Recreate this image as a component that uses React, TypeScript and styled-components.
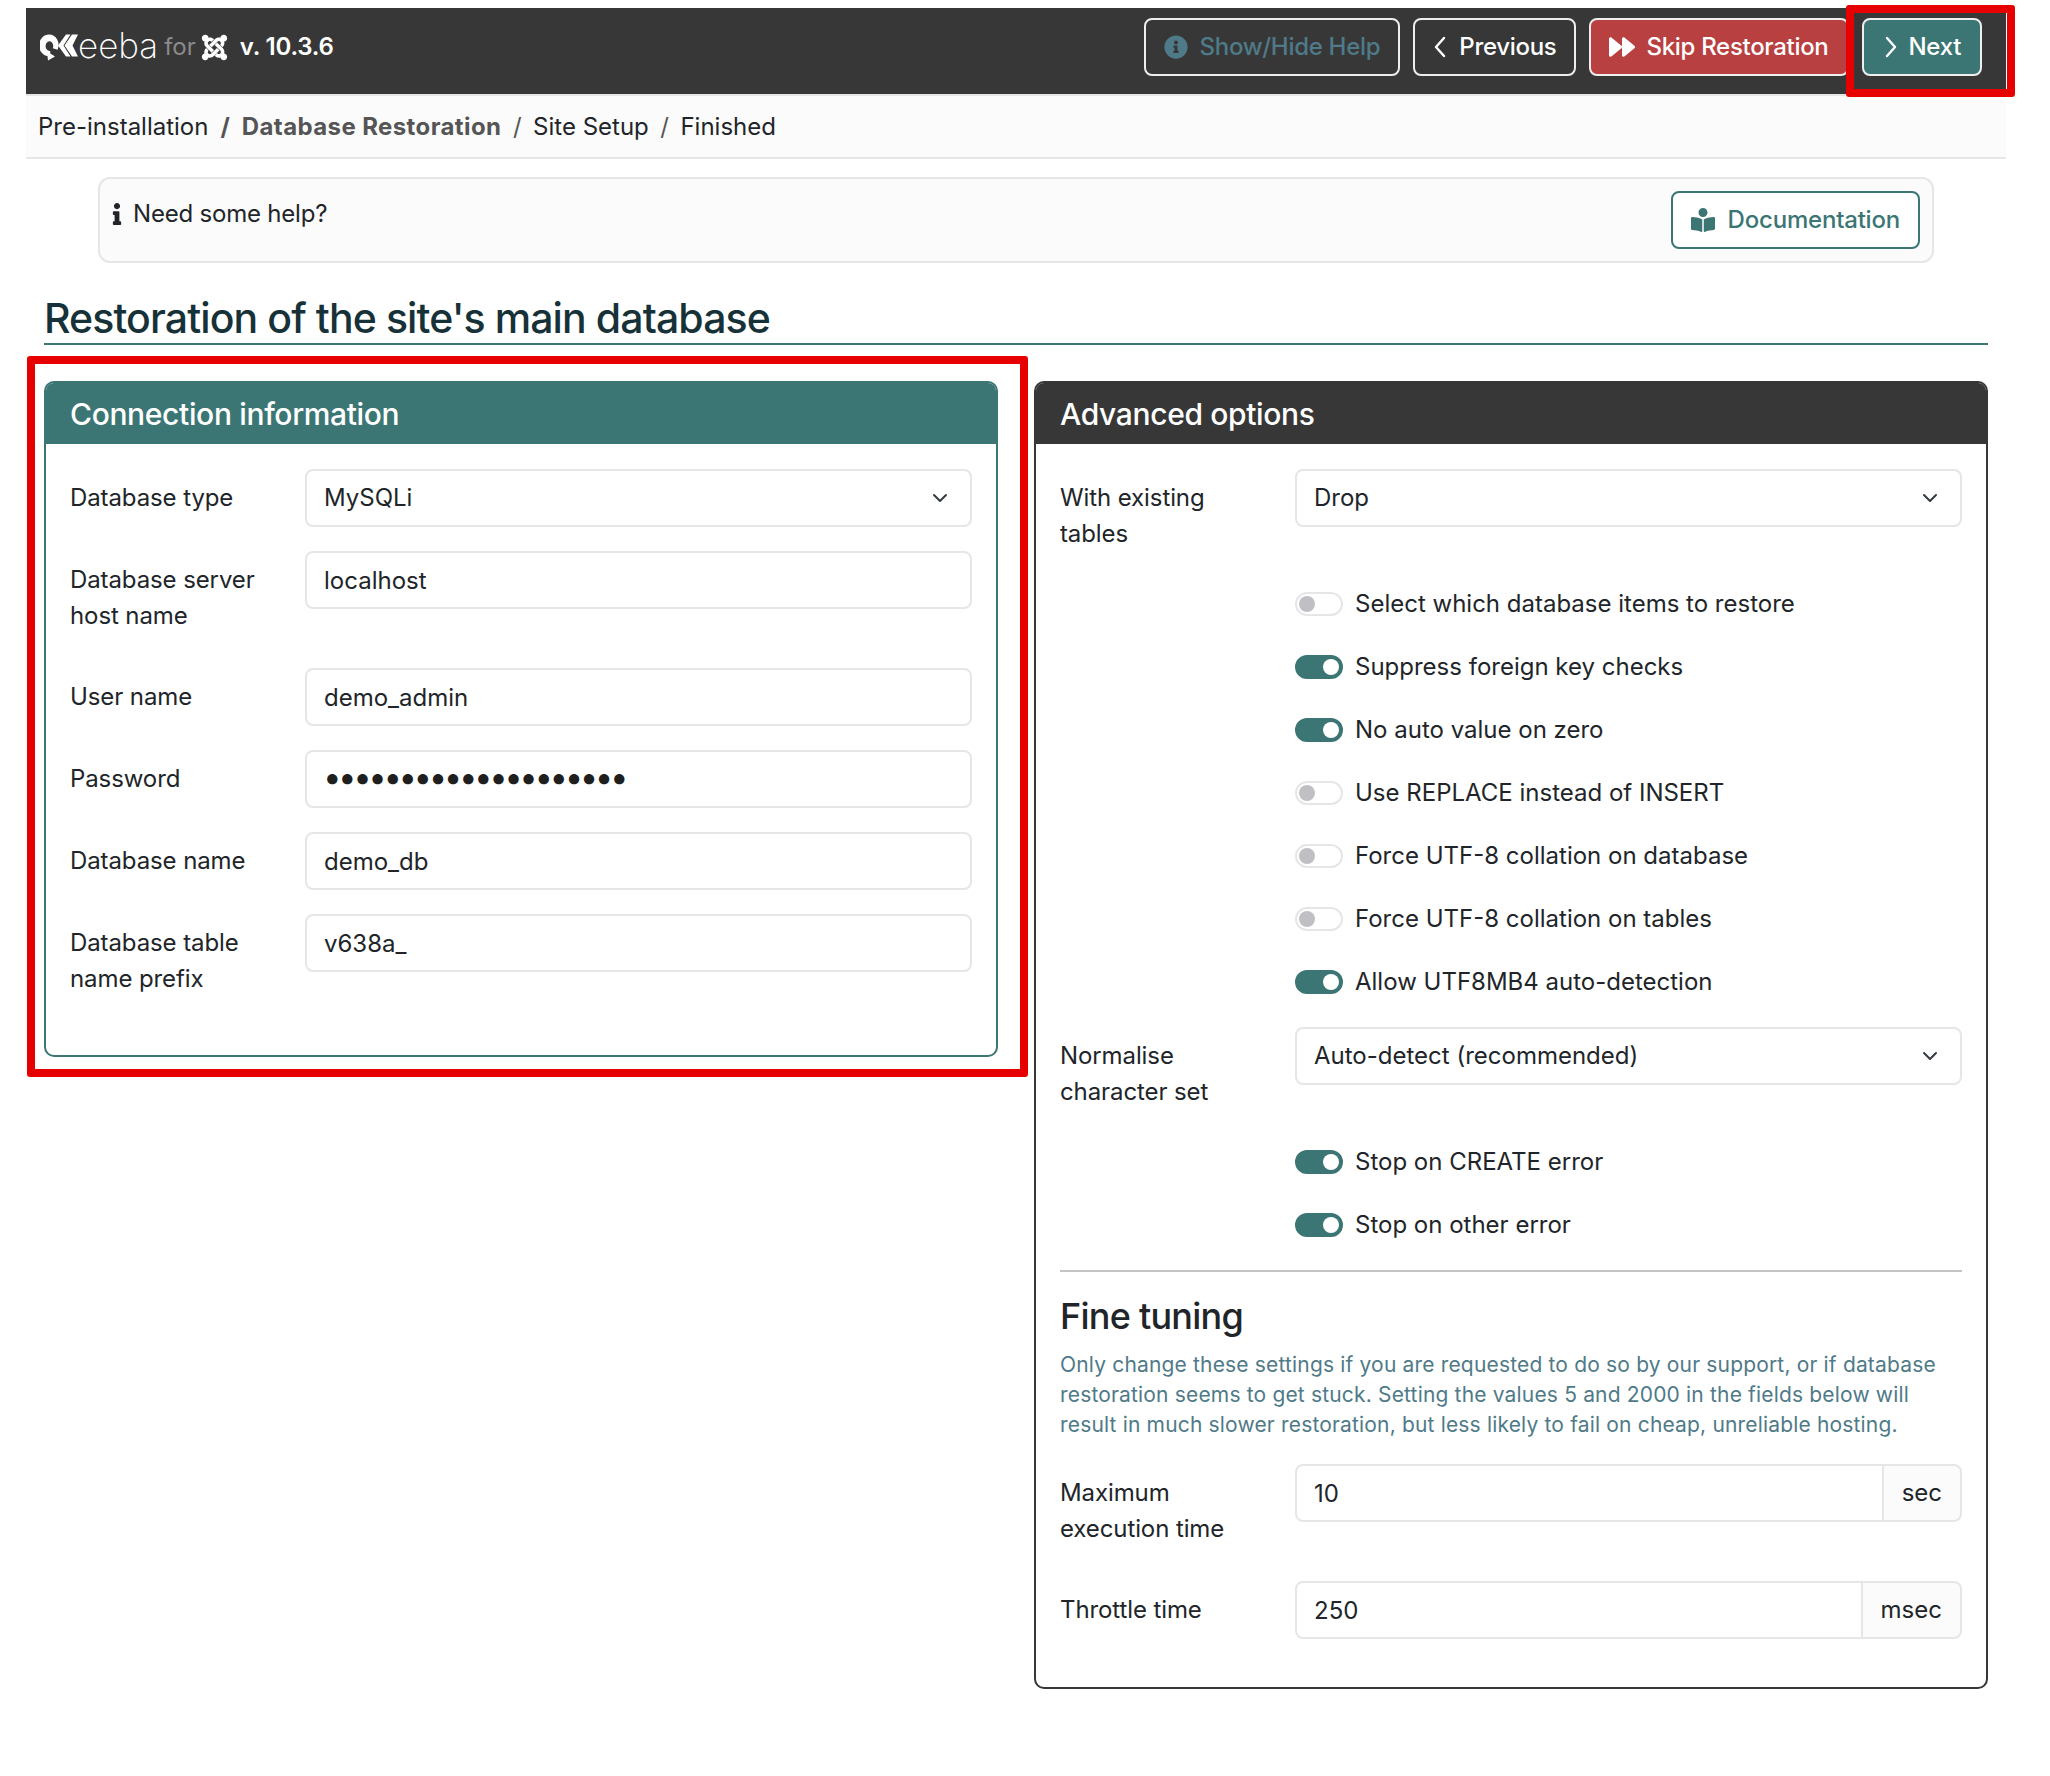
import React from "react";
import styled, { createGlobalStyle } from "styled-components";
import { FaBookReader, FaForward, FaInfo, FaInfoCircle, FaJoomla } from "react-icons/fa";

const TEAL = "#3b7675";
const DARK = "#373737";
const MUTED = "#4f7a88";
const LINE = "#e6e6e6";

const GlobalStyle = createGlobalStyle`
  html, body {
    margin: 0;
    background: #fff;
  }
  body {
    font-family: Inter, "Liberation Sans", sans-serif;
    font-size: 24px;
    line-height: 36px;
    color: #212529;
  }
  * {
    box-sizing: border-box;
  }
`;

const Page = styled.div`
  position: relative;
  width: 2050px;
  height: 1776px;
  padding: 8px 44px 0 26px;
  overflow: hidden;
`;

const Toolbar = styled.header`
  display: flex;
  justify-content: space-between;
  align-items: center;
  height: 88px;
  padding: 10px 24px 18px 14px;
  background: ${DARK};
  border-bottom: 2px solid ${LINE};
`;

const Brand = styled.div`
  display: flex;
  align-items: center;
  color: #fff;
`;

const LogoWord = styled.span`
  font-weight: 200;
  font-size: 35px;
  line-height: 50px;
  margin: -4px 0 0 0;
`;

const LogoFor = styled.span`
  color: #8a8a8a;
  margin-left: 6px;
`;

const JoomlaMark = styled(FaJoomla)`
  width: 29px;
  height: 29px;
  margin-left: 4px;
`;

const Version = styled.span`
  margin-left: 11px;
  font-weight: 600;
  letter-spacing: -0.2px;
`;

const Actions = styled.div`
  display: flex;
  gap: 13px;
`;

const ToolButton = styled.button<{ $bg?: string; $fg?: string }>`
  display: flex;
  align-items: center;
  gap: 12px;
  height: 58px;
  padding: 0 18px;
  font: 500 24px/36px Inter, sans-serif;
  letter-spacing: -0.3px;
  color: ${({ $fg }) => $fg || "#fff"};
  background: ${({ $bg }) => $bg || "transparent"};
  border: 2px solid #eee;
  border-radius: 8px;
`;

const SkipButton = styled(ToolButton)`
  gap: 11px;
`;

const NextButton = styled(ToolButton)`
  gap: 11px;
  padding: 0 19px 0 20px;
`;

const Breadcrumb = styled.nav`
  display: flex;
  align-items: center;
  height: 63px;
  padding: 0 12px;
  background: #fbfbfb;
  border-bottom: 2px solid ${LINE};
`;

const Step = styled.span<{ $active?: boolean }>`
  font-weight: ${({ $active }) => ($active ? 700 : 400)};
  letter-spacing: ${({ $active }) => ($active ? "0.4px" : "0")};
  color: ${({ $active }) => ($active ? "#555" : "#212529")};
`;

const Slash = styled.span<{ $bold?: boolean }>`
  margin: 0 ${({ $bold }) => ($bold ? "12px" : "11.5px")};
  font-weight: ${({ $bold }) => ($bold ? 700 : 400)};
  color: #555;
`;

const Well = styled.div`
  display: flex;
  justify-content: space-between;
  margin: 18px 72px 0;
  height: 86px;
  padding: 12px;
  background: #fbfbfb;
  border: 2px solid ${LINE};
  border-radius: 12px;
`;

const HelpText = styled.div`
  display: flex;
  align-items: center;
  gap: 11px;
  height: 36px;
  margin-top: 5px;
  letter-spacing: -0.2px;
`;

const HelpIcon = styled(FaInfo)`
  width: 10px;
  height: 22px;
`;

const DocButton = styled.button`
  display: flex;
  align-items: center;
  gap: 13px;
  height: 58px;
  padding: 0 18px;
  font: 500 24px/36px Inter, sans-serif;
  letter-spacing: -0.2px;
  color: ${TEAL};
  background: #fff;
  border: 2px solid ${TEAL};
  border-radius: 8px;
`;

const Main = styled.main`
  padding: 0 18px;
`;

const Title = styled.h1`
  margin: 30px 0 36px;
  font-size: 41px;
  line-height: 50px;
  font-weight: 540;
  letter-spacing: -0.9px;
  color: #163238;
  border-bottom: 2px solid ${TEAL};
`;

const Columns = styled.div`
  display: grid;
  grid-template-columns: 954px 954px;
  gap: 36px;
  align-items: start;
`;

const Panel = styled.section<{ $color: string }>`
  border: 2px solid ${({ $color }) => $color};
  border-radius: 10px;
  overflow: hidden;
`;

const PanelHeader = styled.h2<{ $color: string }>`
  margin: -2px -2px 0;
  height: 63px;
  padding: 0 26px;
  font-size: 30px;
  line-height: 66px;
  font-weight: 500;
  letter-spacing: -0.35px;
  color: #fff;
  background: ${({ $color }) => $color};
`;

const PanelBody = styled.div`
  padding: 25px 24px 24px;
`;

const Row = styled.div`
  display: grid;
  grid-template-columns: 235px 1fr;
  margin-bottom: 24px;
`;

const Label = styled.label`
  padding: 10.5px 20px 10.5px 0;
  letter-spacing: -0.1px;
`;

const Input = styled.input`
  display: block;
  width: 100%;
  height: 58px;
  padding: 0 17px;
  font: 400 24px/36px Inter, sans-serif;
  color: #212529;
  background: #fff;
  border: 2px solid ${LINE};
  border-radius: 8px;
  outline: none;
`;

const PasswordInput = styled(Input)`
  padding: 0 18px 5px 16px;
  font-size: 33px;
  letter-spacing: -3.46px;
  color: #1f1f1f;
`;

const SelectWrap = styled.div`
  position: relative;
`;

const SelectBox = styled.select`
  display: block;
  width: 100%;
  height: 58px;
  padding: 0 17px;
  font: 400 24px/36px Inter, sans-serif;
  color: #212529;
  background: #fff;
  border: 2px solid ${LINE};
  border-radius: 8px;
  appearance: none;
  outline: none;
`;

const Caret = styled.svg`
  position: absolute;
  top: 21px;
  right: 24px;
  width: 16px;
  height: 16px;
  pointer-events: none;
`;

const SwitchRow = styled.div`
  display: flex;
  align-items: center;
  gap: 12px;
  height: 36px;
  margin: 0 0 27px 235px;
`;

const SwitchTrack = styled.span<{ $on?: boolean }>`
  position: relative;
  display: block;
  width: 48px;
  height: 24px;
  border-radius: 12px;
  background: ${({ $on }) => ($on ? TEAL : "#fff")};
  border: 2px solid ${({ $on }) => ($on ? TEAL : LINE)};

  &::after {
    content: "";
    position: absolute;
    top: 2px;
    left: ${({ $on }) => ($on ? "26px" : "2px")};
    width: 16px;
    height: 16px;
    border-radius: 50%;
    background: ${({ $on }) => ($on ? "#fff" : "#c0bfc3")};
  }
`;

const Divider = styled.hr`
  margin: 2px 0 0;
  border: 0;
  border-top: 2px solid #c4c4c4;
`;

const SubTitle = styled.h3`
  margin: 22px 0 12px;
  font-size: 36px;
  line-height: 44px;
  font-weight: 500;
  letter-spacing: -0.75px;
`;

const Note = styled.p`
  margin: 0 0 24px;
  font-size: 21px;
  line-height: 30px;
  letter-spacing: 0.17px;
  color: ${MUTED};
`;

const InputGroup = styled.div`
  display: flex;

  ${Input} {
    flex: 1;
    min-width: 0;
    border-radius: 8px 0 0 8px;
  }
`;

const Addon = styled.span`
  display: flex;
  align-items: center;
  height: 58px;
  padding: 0 18px;
  margin-left: -2px;
  background: #fbfbfb;
  border: 2px solid ${LINE};
  border-radius: 0 8px 8px 0;
`;

// red marks the author put on top of the screenshot
const MarkNext = styled.div`
  position: absolute;
  left: 1846px;
  top: 5px;
  width: 169px;
  height: 92px;
  border: 8px solid #e60000;
  border-radius: 3px;
`;

const MarkConnection = styled.div`
  position: absolute;
  left: 27px;
  top: 356px;
  width: 1001px;
  height: 721px;
  border: 8px solid #e60000;
  border-radius: 3px;
`;

const Chevron = ({ d }: { d: string }) => (
  <svg width="14" height="24" viewBox="0 0 14 24" fill="none" stroke="currentColor" strokeWidth="2.4" strokeLinecap="round" strokeLinejoin="round">
    <path d={d} />
  </svg>
);

const AkeebaMark = () => (
  <svg width="38" height="27" viewBox="0 0 38 27" fill="#fff">
    <path d="M9 0.5a9.5 10.5 0 0 1 8.6 15.2l-4.8-1.4a3.8 4.8 0 1 0-3.6 2.6l1 0v5.2l-1.2 0.2A9.5 10.5 0 0 1 9 0.5z" />
    <path d="M7 17.5l8 5-7 4z" />
    <path d="M18 11.5L26 0.5h4.5L23.5 11.5l7 11H26z" />
    <path d="M24.5 11.5L32 0.5H38L32.5 11.5 38 22.5h-6z" />
  </svg>
);

const SelectField = ({ value }: { value: string }) => (
  <SelectWrap>
    <SelectBox defaultValue={value}>
      <option>{value}</option>
    </SelectBox>
    <Caret viewBox="0 0 16 16" fill="none" stroke="#343a40" strokeWidth="2" strokeLinecap="round" strokeLinejoin="round">
      <path d="M2 5l6 6 6-6" />
    </Caret>
  </SelectWrap>
);

const Toggle = ({ on, children }: { on?: boolean; children: React.ReactNode }) => (
  <SwitchRow>
    <SwitchTrack $on={on} />
    <span>{children}</span>
  </SwitchRow>
);

const App: React.FC = () => {
  return (
    <Page>
      <GlobalStyle />
      <Toolbar>
        <Brand>
          <AkeebaMark />
          <LogoWord>eeba</LogoWord>
          <LogoFor>for</LogoFor>
          <JoomlaMark />
          <Version>v. 10.3.6</Version>
        </Brand>
        <Actions>
          <ToolButton $fg={MUTED}>
            <FaInfoCircle size={24} />
            Show/Hide Help
          </ToolButton>
          <ToolButton>
            <Chevron d="M11 3l-8 9 8 9" />
            Previous
          </ToolButton>
          <SkipButton $bg="#b94040">
            <FaForward size={26} />
            Skip Restoration
          </SkipButton>
          <NextButton $bg={TEAL}>
            <Chevron d="M3 3l8 9-8 9" />
            Next
          </NextButton>
        </Actions>
      </Toolbar>

      <Breadcrumb>
        <Step>Pre-installation</Step>
        <Slash $bold>/</Slash>
        <Step $active>Database Restoration</Step>
        <Slash>/</Slash>
        <Step>Site Setup</Step>
        <Slash>/</Slash>
        <Step>Finished</Step>
      </Breadcrumb>

      <Well>
        <HelpText>
          <HelpIcon />
          Need some help?
        </HelpText>
        <DocButton>
          <FaBookReader size={24} />
          Documentation
        </DocButton>
      </Well>

      <Main>
        <Title>Restoration of the site's main database</Title>
        <Columns>
          <Panel $color={TEAL}>
            <PanelHeader $color={TEAL}>Connection information</PanelHeader>
            <PanelBody>
              <Row>
                <Label>Database type</Label>
                <SelectField value="MySQLi" />
              </Row>
              <Row>
                <Label>Database server host name</Label>
                <Input readOnly defaultValue="localhost" />
              </Row>
              <Row>
                <Label>User name</Label>
                <Input readOnly defaultValue="demo_admin" />
              </Row>
              <Row>
                <Label>Password</Label>
                <PasswordInput readOnly type="password" defaultValue="aaaaaaaaaaaaaaaaaaaa" />
              </Row>
              <Row>
                <Label>Database name</Label>
                <Input readOnly defaultValue="demo_db" />
              </Row>
              <Row>
                <Label>Database table name prefix</Label>
                <Input readOnly defaultValue="v638a_" />
              </Row>
            </PanelBody>
          </Panel>

          <Panel $color={DARK}>
            <PanelHeader $color={DARK}>Advanced options</PanelHeader>
            <PanelBody>
              <Row>
                <Label>With existing tables</Label>
                <SelectField value="Drop" />
              </Row>
              <Toggle>Select which database items to restore</Toggle>
              <Toggle on>Suppress foreign key checks</Toggle>
              <Toggle on>No auto value on zero</Toggle>
              <Toggle>Use REPLACE instead of INSERT</Toggle>
              <Toggle>Force UTF-8 collation on database</Toggle>
              <Toggle>Force UTF-8 collation on tables</Toggle>
              <Toggle on>Allow UTF8MB4 auto-detection</Toggle>
              <Row>
                <Label>Normalise character set</Label>
                <SelectField value="Auto-detect (recommended)" />
              </Row>
              <Toggle on>Stop on CREATE error</Toggle>
              <Toggle on>Stop on other error</Toggle>
              <Divider />
              <SubTitle>Fine tuning</SubTitle>
              <Note>
                Only change these settings if you are requested to do so by our support, or if database restoration
                seems to get stuck. Setting the values 5 and 2000 in the fields below will result in much slower
                restoration, but less likely to fail on cheap, unreliable hosting.
              </Note>
              <Row>
                <Label>Maximum execution time</Label>
                <InputGroup>
                  <Input readOnly defaultValue="10" />
                  <Addon>sec</Addon>
                </InputGroup>
              </Row>
              <Row>
                <Label>Throttle time</Label>
                <InputGroup>
                  <Input readOnly defaultValue="250" />
                  <Addon>msec</Addon>
                </InputGroup>
              </Row>
            </PanelBody>
          </Panel>
        </Columns>
      </Main>

      <MarkNext />
      <MarkConnection />
    </Page>
  );
};

export default App;
